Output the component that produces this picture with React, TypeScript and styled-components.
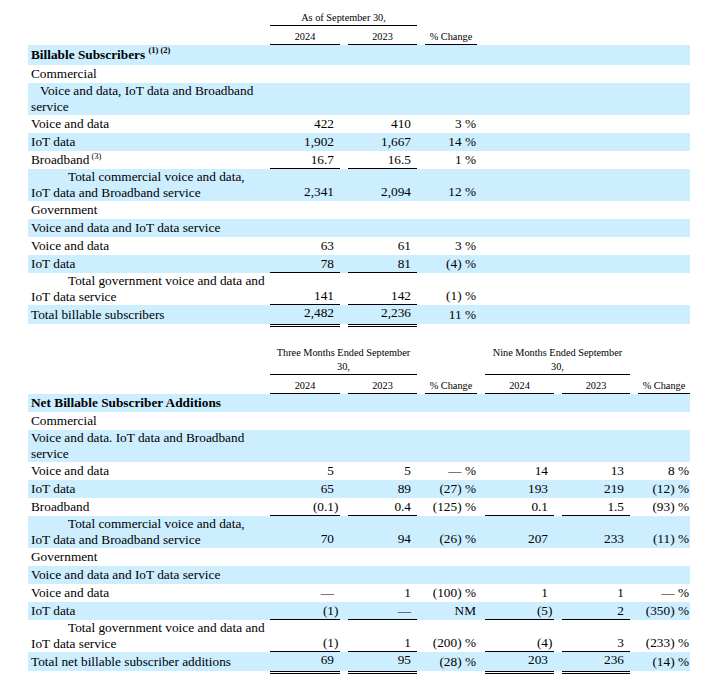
import React from "react";
import styled, { createGlobalStyle } from "styled-components";

const GlobalStyle = createGlobalStyle`
  html, body { padding: 0; background: #ffffff; }
  body {
    margin: 8px;
    font-family: "Liberation Serif", "Times New Roman", serif;
    color: #000000;
  }
`;

const SHADE = "#cceeff";

const Page = styled.div`
  margin-left: 20px;
  width: 662px;
  display: flex;
  flex-direction: column;
`;

const Table = styled.section<{ $top?: number }>`
  display: flex;
  flex-direction: column;
  margin-top: ${(p) => p.$top ?? 0}px;
`;

const HeadRow = styled.div<{ $cols: string; $pt: number }>`
  display: grid;
  grid-template-columns: ${(p) => p.$cols};
  align-items: end;
  padding-top: ${(p) => p.$pt}px;
`;

const HeadCell = styled.div<{ $gap?: boolean; $span?: number }>`
  grid-column: span ${(p) => p.$span ?? 1};
  margin-left: ${(p) => (p.$gap ? 8 : 0)}px;
  font-size: 10.3px;
  line-height: 14px;
  text-align: center;
  border-bottom: 1px solid #000;
`;

const Row = styled.div<{ $cols: string; $shade?: boolean; $h?: number }>`
  display: grid;
  grid-template-columns: ${(p) => p.$cols};
  align-items: stretch;
  min-height: ${(p) => p.$h ?? 18}px;
  background: ${(p) => (p.$shade ? SHADE : "transparent")};
`;

const Label = styled.div<{ $indent?: number; $bold?: boolean }>`
  align-self: center;
  padding: 0 3px;
  font-size: 13.3px;
  line-height: 16px;
  font-weight: ${(p) => (p.$bold ? 700 : 400)};
  text-indent: ${(p) => p.$indent ?? 0}px;
  white-space: nowrap;
`;

const Value = styled.div<{ $gap?: boolean; $rule?: boolean; $raise?: boolean }>`
  box-sizing: border-box;
  margin-left: ${(p) => (p.$gap ? 8 : 0)}px;
  display: flex;
  justify-content: flex-end;
  align-items: flex-end;
  padding: 0 1px ${(p) => (p.$raise ? 2 : 0)}px 0;
  font-size: 13.3px;
  line-height: 16px;
  white-space: nowrap;
  border-bottom: 1px solid ${(p) => (p.$rule ? "#000" : "transparent")};
`;

const Paren = styled.span`
  display: inline-block;
  width: 5px;
  text-align: left;
`;

const Sup = styled.sup<{ $lift: number }>`
  font-size: 8.5px;
  line-height: 0;
  vertical-align: ${(p) => p.$lift}px;
  white-space: pre;
`;

const RuleRow = styled.div<{ $cols: string }>`
  display: grid;
  grid-template-columns: ${(p) => p.$cols};
  height: 3px;
`;

const DoubleRule = styled.div<{ $gap?: boolean }>`
  margin-left: ${(p) => (p.$gap ? 8 : 0)}px;
  border-top: 1px solid #000;
  border-bottom: 1px solid #000;
`;

type Kind = "n" | "p";
type Line = {
  label: React.ReactNode;
  indent?: number;
  bold?: boolean;
  shade?: boolean;
  vals?: string[];
  rule?: boolean;
  total?: boolean;
  h?: number;
};

const COLS1 = "242px 70px 77px 60px 1fr";
const COLS2 = "242px 70px 77px 60px 77px 76px 60px";
const KINDS1: Kind[] = ["n", "n", "p"];
const KINDS2: Kind[] = ["n", "n", "p", "n", "n", "p"];

const Num: React.FC<{ v: string }> = ({ v }) => {
  const hang = v.endsWith(")");
  return (
    <>
      <span>{hang ? v.slice(0, -1) : v}</span>
      <Paren>{hang ? ")" : ""}</Paren>
    </>
  );
};

const DataRow: React.FC<{ line: Line; cols: string; kinds: Kind[] }> = ({ line, cols, kinds }) => (
  <Row $cols={cols} $shade={line.shade} $h={line.h}>
    <Label $indent={line.indent} $bold={line.bold}>
      {line.label}
    </Label>
    {line.vals &&
      line.vals.map((v, i) =>
        kinds[i] === "n" ? (
          <Value key={i} $gap={i > 0} $rule={line.rule} $raise={line.total}>
            <Num v={v} />
          </Value>
        ) : (
          <Value key={i} $gap={i > 0}>
            {v}
          </Value>
        )
      )}
  </Row>
);

const Totals: React.FC<{ cols: string; kinds: Kind[] }> = ({ cols, kinds }) => (
  <RuleRow $cols={cols}>
    <div />
    {kinds.map((k, i) => (k === "n" ? <DoubleRule key={i} $gap={i > 0} /> : <div key={i} />))}
  </RuleRow>
);

const table1: Line[] = [
  {
    label: (
      <>
        Billable Subscribers <Sup $lift={6}>(1) (2)</Sup>
      </>
    ),
    bold: true,
    shade: true,
    h: 20,
  },
  { label: "Commercial" },
  {
    label: (
      <>
        Voice and data, IoT data and Broadband
        <br />
        service
      </>
    ),
    indent: 9,
    shade: true,
  },
  { label: "Voice and data", vals: ["422", "410", "3 %"] },
  { label: "IoT data", vals: ["1,902", "1,667", "14 %"], shade: true },
  {
    label: (
      <>
        Broadband<Sup $lift={5}> (3)</Sup>
      </>
    ),
    vals: ["16.7", "16.5", "1 %"],
    rule: true,
  },
  {
    label: (
      <>
        Total commercial voice and data,
        <br />
        IoT data and Broadband service
      </>
    ),
    indent: 37,
    vals: ["2,341", "2,094", "12 %"],
    shade: true,
  },
  { label: "Government" },
  { label: "Voice and data and IoT data service", shade: true },
  { label: "Voice and data", vals: ["63", "61", "3 %"] },
  { label: "IoT data", vals: ["78", "81", "(4) %"], shade: true, rule: true },
  {
    label: (
      <>
        Total government voice and data and
        <br />
        IoT data service
      </>
    ),
    indent: 37,
    vals: ["141", "142", "(1) %"],
    rule: true,
  },
  { label: "Total billable subscribers", vals: ["2,482", "2,236", "11 %"], shade: true, total: true },
];

const table2: Line[] = [
  { label: "Net Billable Subscriber Additions", bold: true, shade: true },
  { label: "Commercial" },
  {
    label: (
      <>
        Voice and data. IoT data and Broadband
        <br />
        service
      </>
    ),
    shade: true,
  },
  { label: "Voice and data", vals: ["5", "5", "— %", "14", "13", "8 %"] },
  { label: "IoT data", vals: ["65", "89", "(27) %", "193", "219", "(12) %"], shade: true },
  { label: "Broadband", vals: ["(0.1)", "0.4", "(125) %", "0.1", "1.5", "(93) %"], rule: true },
  {
    label: (
      <>
        Total commercial voice and data,
        <br />
        IoT data and Broadband service
      </>
    ),
    indent: 37,
    vals: ["70", "94", "(26) %", "207", "233", "(11) %"],
    shade: true,
  },
  { label: "Government" },
  { label: "Voice and data and IoT data service", shade: true },
  { label: "Voice and data", vals: ["—", "1", "(100) %", "1", "1", "— %"] },
  { label: "IoT data", vals: ["(1)", "—", "NM", "(5)", "2", "(350) %"], shade: true, rule: true },
  {
    label: (
      <>
        Total government voice and data and
        <br />
        IoT data service
      </>
    ),
    indent: 37,
    vals: ["(1)", "1", "(200) %", "(4)", "3", "(233) %"],
    rule: true,
  },
  {
    label: "Total net billable subscriber additions",
    vals: ["69", "95", "(28) %", "203", "236", "(14) %"],
    shade: true,
    total: true,
  },
];

export default function App() {
  return (
    <>
      <GlobalStyle />
      <Page>
        <Table>
          <HeadRow $cols={COLS1} $pt={3}>
            <div />
            <HeadCell $span={2}>As of September 30,</HeadCell>
          </HeadRow>
          <HeadRow $cols={COLS1} $pt={4}>
            <div />
            <HeadCell>2024</HeadCell>
            <HeadCell $gap>2023</HeadCell>
            <HeadCell $gap>% Change</HeadCell>
          </HeadRow>
          {table1.map((l, i) => (
            <DataRow key={i} line={l} cols={COLS1} kinds={KINDS1} />
          ))}
          <Totals cols={COLS1} kinds={KINDS1} />
        </Table>

        <Table $top={19}>
          <HeadRow $cols={COLS2} $pt={0}>
            <div />
            <HeadCell $span={2}>
              Three Months Ended September
              <br />
              30,
            </HeadCell>
            <div />
            <HeadCell $gap $span={2}>
              Nine Months Ended September
              <br />
              30,
            </HeadCell>
          </HeadRow>
          <HeadRow $cols={COLS2} $pt={4}>
            <div />
            <HeadCell>2024</HeadCell>
            <HeadCell $gap>2023</HeadCell>
            <HeadCell $gap>% Change</HeadCell>
            <HeadCell $gap>2024</HeadCell>
            <HeadCell $gap>2023</HeadCell>
            <HeadCell $gap>% Change</HeadCell>
          </HeadRow>
          {table2.map((l, i) => (
            <DataRow key={i} line={l} cols={COLS2} kinds={KINDS2} />
          ))}
          <Totals cols={COLS2} kinds={KINDS2} />
        </Table>
      </Page>
    </>
  );
}
